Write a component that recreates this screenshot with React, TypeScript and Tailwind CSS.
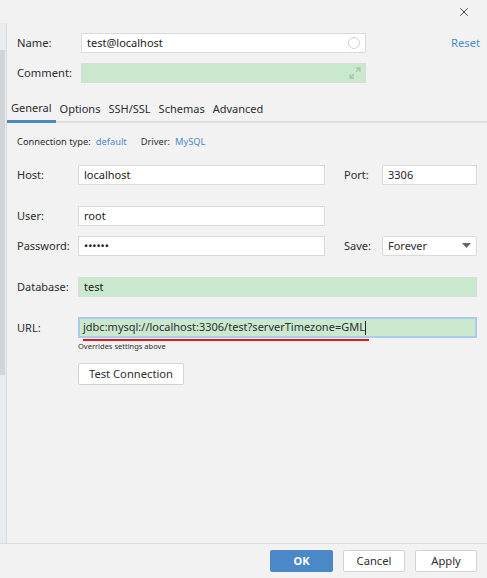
import { X } from 'lucide-react';

const font = { fontFamily: '"Noto Sans", "Open Sans", sans-serif' };

const Field = ({ value, green, className = '' }: { value: string; green?: boolean; className?: string }) => (
  <div
    className={`h-[20px] border flex items-center px-[5px] text-[11px] text-[#222] ${
      green ? 'bg-[#cae8cd] border-[#d6dcd6]' : 'bg-white border-[#dadada]'
    } ${className}`}
  >
    {value}
  </div>
);

export default function App() {
  return (
    <div className="w-[487px] h-[578px] bg-[#f2f2f2] flex flex-col text-[#2d2d2d] overflow-hidden" style={font}>
      {/* title strip */}
      <div className="h-[23px] flex justify-end items-center pr-[16px] shrink-0">
        <X size={14} strokeWidth={1.5} className="text-[#333] mt-[1px]" />
      </div>

      <div className="flex flex-1 min-h-0">
        {/* left rail */}
        <div className="w-[7px] bg-[#e9ecef] border-r border-[#dadada] flex flex-col shrink-0">
          <div className="h-[27px]" />
          <div className="w-[5px] h-[325px] bg-[#d1d4d8]" />
        </div>

        <div className="flex-1 flex flex-col">
          {/* name / comment */}
          <div className="pl-[10px] pt-[10px]">
            <div className="flex items-center h-[20px]">
              <span className="w-[64px] text-[11.2px]">Name:</span>
              <div className="relative">
                <Field value="test@localhost" className="w-[285px] text-[11.2px]" />
                <span className="absolute right-[6px] top-[4px] w-[12px] h-[12px] rounded-full border border-[#cfcfcf]" />
              </div>
              <span className="ml-auto mr-[7px] text-[11.2px] text-[#4a8ac9]">Reset</span>
            </div>
            <div className="flex items-center h-[20px] mt-[10px]">
              <span className="w-[64px] text-[11.2px]">Comment:</span>
              <div className="relative">
                <Field value="" green className="w-[285px]" />
                <svg className="absolute right-[5px] top-[4px]" width="12" height="12" viewBox="0 0 12 12">
                  <path d="M7 1h4v4M11 1L7 5M1 7v4h4M1 11l4-4" stroke="#9fc9a3" strokeWidth="1.3" fill="none" />
                </svg>
              </div>
            </div>
          </div>

          {/* tabs */}
          <div className="mt-[14px] flex border-b-[2px] border-[#e0e0e0] h-[26px] text-[11px]">
            <span className="pl-[4px] pr-[4px] border-b-[3px] border-[#4a88c7] -mb-[2px] flex items-center">General</span>
            <span className="px-[4px] flex items-center">Options</span>
            <span className="px-[4px] flex items-center">SSH/SSL</span>
            <span className="px-[4px] flex items-center">Schemas</span>
            <span className="px-[4px] flex items-center">Advanced</span>
          </div>

          {/* general tab */}
          <div className="pl-[10px] pr-[10px]">
            <div className="flex items-center h-[14px] mt-[12px] text-[9.3px]">
              <span>Connection type:</span>
              <span className="ml-[5px] text-[#4a8ac9]">default</span>
              <span className="ml-[14px]">Driver:</span>
              <span className="ml-[5px] text-[#4a8ac9]">MySQL</span>
            </div>

            <div className="grid grid-cols-[61px_247px_19px_38px_95px] items-center text-[11px] mt-[16px]">
              <span>Host:</span>
              <Field value="localhost" />
              <span />
              <span>Port:</span>
              <Field value="3306" />
            </div>

            <div className="grid grid-cols-[61px_247px] items-center text-[11px] mt-[21px]">
              <span>User:</span>
              <Field value="root" />
            </div>

            <div className="grid grid-cols-[61px_247px_19px_38px_95px] items-center text-[11px] mt-[10px]">
              <span>Password:</span>
              <Field value="••••••" className="text-[10px]" />
              <span />
              <span>Save:</span>
              <div className="h-[20px] bg-white border border-[#dadada] rounded-[2px] flex items-center justify-between px-[5px]">
                <span>Forever</span>
                <svg width="9" height="6" viewBox="0 0 9 6">
                  <path d="M0 0h9L4.5 5z" fill="#666" />
                </svg>
              </div>
            </div>

            <div className="grid grid-cols-[61px_399px] items-center text-[11px] mt-[21px]">
              <span>Database:</span>
              <Field value="test" green />
            </div>

            <div className="grid grid-cols-[61px_399px] items-start text-[11px] mt-[20px]">
              <span className="leading-[21px]">URL:</span>
              <div className="flex flex-col">
                <div className="relative h-[21px] bg-[#cae8cd] border-[2px] border-[#a9cbee] flex items-center pl-[3px]">
                  <span>jdbc:mysql://localhost:3306/test?serverTimezone=GML</span>
                  <span className="w-px h-[14px] bg-[#222]" />
                  <span className="absolute left-[3px] top-[20px] w-[286px] h-[2px] bg-[#e01b1b]" />
                </div>
                <span className="text-[7.5px] mt-[3px] leading-[10px]">Overrides settings above</span>
              </div>
            </div>

            <div className="grid grid-cols-[61px_auto] mt-[12px]">
              <span />
              <button className="w-[106px] h-[22px] bg-white border border-[#d3d3d3] rounded-[2px] text-[11.2px]">
                Test Connection
              </button>
            </div>
          </div>
        </div>
      </div>

      {/* footer */}
      <div className="h-[35px] border-t border-[#dcdcdc] flex items-center justify-end gap-[10px] pr-[10px] shrink-0">
        <button className="w-[63px] h-[22px] rounded-[2px] bg-[#4a88c7] text-white text-[11px] font-bold">OK</button>
        <button className="w-[62px] h-[22px] rounded-[2px] bg-white border border-[#d3d3d3] text-[11.2px]">Cancel</button>
        <button className="w-[62px] h-[22px] rounded-[2px] bg-white border border-[#d3d3d3] text-[11.2px]">Apply</button>
      </div>
    </div>
  );
}
